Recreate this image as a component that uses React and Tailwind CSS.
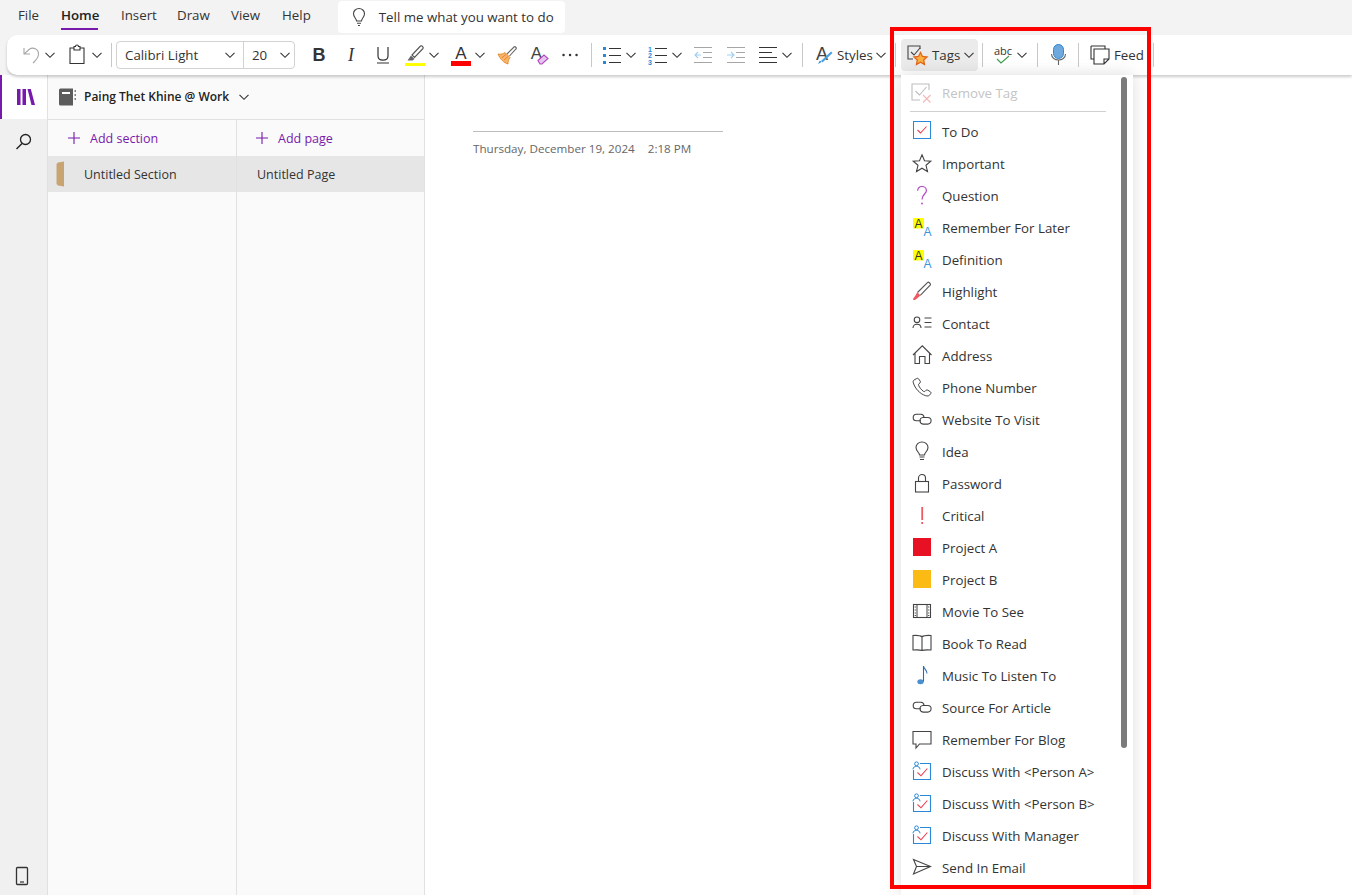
import React from "react";

const Svg = ({ w = 20, h = 20, className = "", children }) => (
  <svg width={w} height={h} viewBox={`0 0 ${w} ${h}`} fill="none" className={`block shrink-0 overflow-visible ${className}`}>
    {children}
  </svg>
);

const Chev = ({ className = "" }) => (
  <div className={`flex h-3 w-3 shrink-0 items-center justify-center ${className}`}>
    <Svg w={12} h={12}>
      <path d="M1.500 3.800 6 8.300l4.500-4.500" stroke="#333" strokeWidth="1.100" />
    </Svg>
  </div>
);

const Sep = ({ className = "" }) => <div className={`h-6 w-px shrink-0 bg-[#c8c8c8] ${className}`} />;

const Link2 = () => (
  <g stroke="#444" strokeWidth="1.100">
    <path d="M9 11.800H4.500a3.300 3.300 0 0 1 0-6.600h4.500a3.300 3.300 0 0 1 3 3.300" />
    <path d="M8 12a3.300 3.300 0 0 1 3-3.500h4.800a3.300 3.300 0 0 1 0 6.600H11a3.300 3.300 0 0 1-3-3.100z" />
  </g>
);

const AA = () => (
  <>
    <rect x="1" y="1" width="11" height="10.500" fill="#ffff00" />
    <text x="6.500" y="10.500" textAnchor="middle" fontSize="12" fill="#333" fontFamily="Liberation Sans">A</text>
    <text x="15.500" y="19" textAnchor="middle" fontSize="12" fill="#3a96dd" fontFamily="Liberation Sans">A</text>
  </>
);

const Discuss = () => (
  <>
    <path d="M8 2.500h10.500v16H1.500V9" stroke="#2b88d8" strokeWidth="1.100" />
    <circle cx="4.500" cy="2.800" r="1.900" stroke="#2b88d8" strokeWidth="1" />
    <path d="M1 8.300c0-4 7-4 7 0" stroke="#2b88d8" strokeWidth="1" />
    <path d="m5.500 11.500 3.500 3.300 6.300-7.300" stroke="#e8434f" strokeWidth="1.100" />
  </>
);

const icons = {
  todo: (
    <>
      <rect x="1.500" y="0.500" width="17" height="17" stroke="#2b88d8" />
      <path d="m5.500 9 3 3 6-6.500" stroke="#e8434f" strokeWidth="1.100" />
    </>
  ),
  star: <path d="m10 1.800 2.500 5.900 6.300.5-4.800 4.100 1.500 6.200L10 15.200l-5.500 3.300L6 12.300 1.200 8.200l6.300-.5z" stroke="#444" strokeWidth="1.100" />,
  question: (
    <>
      <path d="M5.700 5.800C5.800 3 7.700 1.500 10 1.500c2.500 0 4.400 1.700 4.400 4 0 3.500-4.400 3.800-4.400 9" stroke="#b146c2" strokeWidth="1.200" />
      <circle cx="10" cy="18.500" r="0.900" fill="#b146c2" />
    </>
  ),
  aa: <AA />,
  highlight: (
    <>
      <path d="M5.500 11.500 15.700 1.300c.8-.7 3.500 1.600 2.700 2.700L8.300 14.300" stroke="#555" strokeWidth="1.100" />
      <path d="M5.300 11.300 8.500 14.500 5 17.500 3 19H1.200v-1.500L3 15.200z" fill="#ee5a62" />
    </>
  ),
  contact: (
    <>
      <circle cx="5" cy="6.800" r="2.800" stroke="#444" strokeWidth="1.100" />
      <path d="M1 15c0-5 8-5 8 0" stroke="#444" strokeWidth="1.100" />
      <path d="M12.500 5h7M12.500 9.500h7M12.500 14h7" stroke="#444" strokeWidth="1" />
    </>
  ),
  home: <path d="M1 10 10.300 0.800 19.500 10M3 8.500V18.500h4.500V11.500h5.500v7h4.500V8.500" stroke="#444" strokeWidth="1.100" />,
  phone: <path d="M4.800 1.500 2 3c-1 .6-1 1.800-.6 3C3 11.500 8 17 13.700 18.700c1.800.5 3 .3 3.800-.5l1.300-1.700c.4-.6.200-1.200-.3-1.600l-2.600-1.700c-.7-.4-1.200-.4-1.700 0l-1 1c-.6.500-1.200.5-1.800.1-2-1.400-3.900-3.800-4.800-6.100-.2-.6-.1-1.100.4-1.500l1-.8c.5-.5.600-1 .3-1.600L6.700 2c-.4-.7-1.200-.9-1.900-.5z" stroke="#444" strokeWidth="1" />,
  link: <Link2 />,
  idea: (
    <>
      <path d="M7.500 14c0-2.500-3.500-3.800-3.500-7.500C4 3.500 6.500 1 10 1s6 2.500 6 5.500c0 3.700-3.500 5-3.500 7.500z" stroke="#444" strokeWidth="1.100" />
      <path d="M7.500 16h5M8 18.500h4" stroke="#444" strokeWidth="1.100" />
    </>
  ),
  lock: (
    <>
      <rect x="3.500" y="8.500" width="13" height="10.500" stroke="#444" strokeWidth="1.100" />
      <path d="M6.500 8.500V5a3.500 3.500 0 0 1 7 0v3.500" stroke="#444" strokeWidth="1.100" />
    </>
  ),
  critical: (
    <>
      <rect x="9.300" y="2" width="1.800" height="13" fill="#ee5a62" />
      <rect x="9.300" y="17" width="1.800" height="2" fill="#ee5a62" />
    </>
  ),
  a: <rect x="1" y="1" width="18" height="18" fill="#e81123" />,
  b: <rect x="1" y="1" width="18" height="18" fill="#fcba14" />,
  movie: (
    <>
      <rect x="1.500" y="3.500" width="17" height="13" stroke="#444" strokeWidth="1.100" />
      <path d="M5 4v12M15 4v12" stroke="#444" strokeWidth="1" />
      <path d="M3.300 5.500v1M3.300 8.500v1M3.300 11.500v1M3.300 14v1M16.700 5.500v1M16.700 8.500v1M16.700 11.500v1M16.700 14v1" stroke="#444" strokeWidth="1.200" />
    </>
  ),
  book: <path d="M10 3.800C8 2.200 4 2.300 1 2.500v14.500c3-.2 7-.3 9 .5 2-.8 6-.7 9-.5V2.500c-3-.2-7-.3-9 1.300zM10 3.800v13.700" stroke="#444" strokeWidth="1.100" />,
  music: (
    <>
      <ellipse cx="8.500" cy="16.700" rx="3.200" ry="2.500" fill="#4a90d0" />
      <path d="M11.500 16.500V1c.3 3 3.500 3.500 3.500 7.500" stroke="#2b6cb0" strokeWidth="1.100" />
    </>
  ),
  blog: <path d="M1 2.500h18v12.500H7.500L4 19v-4H1z" stroke="#444" strokeWidth="1.100" />,
  discuss: <Discuss />,
  send: <path d="m1.500 2.500 17 7-17 7.500 3-7.500zM4.500 9.500h14" stroke="#444" strokeWidth="1.100" />,
};

const tagItems = [
  ["To Do", "todo"],
  ["Important", "star"],
  ["Question", "question"],
  ["Remember For Later", "aa"],
  ["Definition", "aa"],
  ["Highlight", "highlight"],
  ["Contact", "contact"],
  ["Address", "home"],
  ["Phone Number", "phone"],
  ["Website To Visit", "link"],
  ["Idea", "idea"],
  ["Password", "lock"],
  ["Critical", "critical"],
  ["Project A", "a"],
  ["Project B", "b"],
  ["Movie To See", "movie"],
  ["Book To Read", "book"],
  ["Music To Listen To", "music"],
  ["Source For Article", "link"],
  ["Remember For Blog", "blog"],
  ["Discuss With <Person A>", "discuss"],
  ["Discuss With <Person B>", "discuss"],
  ["Discuss With Manager", "discuss"],
  ["Send In Email", "send"],
];

function Toolbar() {
  return (
    <div className="relative z-20 ml-[7px] flex h-10 items-center rounded-l-[10px] bg-white pl-[15px] text-[13.3px] leading-[21px] text-[#333] shadow-[0_2px_3px_rgba(0,0,0,0.2)]">
      <Svg w={18} h={20}>
        <path d="M2 3v6h6M2.300 8.800 7 4.500c4-3 9.500-.5 9.500 4.500 0 2.500-1.500 5-4 7.500l-1.500 1.500" stroke="#a6a6a6" strokeWidth="1.100" />
      </Svg>
      <Chev className="ml-1" />
      <Svg w={16} h={20} className="ml-[13px]">
        <path d="M4.500 3H1v15.500h14V3h-3.500M5 1.500h1.500a1.500 1.500 0 0 1 3 0H11V5H5z" stroke="#333" strokeWidth="1.100" />
      </Svg>
      <Chev className="ml-[6px]" />
      <Sep className="ml-2" />
      <div className="ml-1 flex h-7 w-[179px] shrink-0 items-center rounded border border-[#d2d2d2]">
        <div className="flex h-full w-[127px] items-center justify-between border-r border-[#d2d2d2] pr-[7px] pl-2">
          <span className="whitespace-nowrap">Calibri Light</span>
          <Chev />
        </div>
        <div className="flex h-full flex-1 items-center justify-between pr-[3px] pl-2">
          <span>20</span>
          <Chev />
        </div>
      </div>
      <div className="ml-4 w-4 shrink-0 text-center font-['Liberation_Sans',sans-serif] text-[18px] leading-none font-bold">B</div>
      <div className="ml-4 w-4 shrink-0 text-center font-['Liberation_Serif',serif] text-[18px] leading-none italic">I</div>
      <div className="ml-4 flex w-4 shrink-0 flex-col items-center">
        <Svg w={16} h={18}>
          <path d="M3 1v9c0 5.500 10 5.500 10 0V1M2 17h12" stroke="#333" strokeWidth="1.200" />
        </Svg>
      </div>
      <Svg w={20} h={22} className="ml-[14px]">
        <path d="M7 11 15.500 2c1-1 3.500 1.500 2.500 2.500L9.500 13.500z" stroke="#555" strokeWidth="1.100" />
        <path d="M6 11.500 9.500 15l-2 1.500H2.500z" fill="#666" />
        <rect x="0" y="19" width="20" height="3" fill="#ffff00" />
      </Svg>
      <Chev className="ml-[3px]" />
      <Svg w={22} h={22} className="ml-[10px]">
        <text x="11" y="15" textAnchor="middle" fontSize="17" fill="#333" fontFamily="Liberation Sans">A</text>
        <rect x="1" y="17" width="20" height="5" fill="#ff0000" />
      </Svg>
      <Chev className="ml-[2px]" />
      <Svg className="ml-[11px]">
        <path d="M1 9c3 .5 5 0 7-1.500l5 5c-1.500 2-2 4-2 6.500C7 18 3 14 1 9z" fill="#f9b36b" stroke="#e07f20" strokeWidth="0.800" />
        <path d="M5 12.500 9 9.500M7 15l4-3.500" stroke="#e07f20" strokeWidth="0.800" />
        <path d="m10 9 7-7c1.200-1 3 1 2 2l-6.500 7" stroke="#666" strokeWidth="1.100" />
      </Svg>
      <Svg className="ml-3">
        <text x="7.500" y="14" textAnchor="middle" fontSize="17" fill="#444" fontFamily="Liberation Sans">A</text>
        <path d="m9 15.500 6-5.500 4 3.500-6 5.500h-2z" stroke="#b146c2" strokeWidth="1.100" fill="#e7c4ee" />
      </Svg>
      <Svg className="ml-3">
        <path d="M2.500 10h2M9 10h2M15.500 10h2" stroke="#333" strokeWidth="2.400" strokeLinecap="round" strokeDasharray="0.100 9" />
      </Svg>
      <Sep className="ml-[10px]" />
      <Svg className="ml-[10px]">
        <rect x="1" y="2" width="3" height="3" fill="#2b88d8" />
        <rect x="1" y="9" width="3" height="3" fill="#2b88d8" />
        <rect x="1" y="16" width="3" height="3" fill="#2b88d8" />
        <path d="M7 3.500h12M7 10.500h12M7 17.500h12" stroke="#333" strokeWidth="1.100" />
      </Svg>
      <Chev className="ml-[3px]" />
      <Svg className="ml-[10px]">
        <text x="3" y="6.500" textAnchor="middle" fontSize="7" fill="#2b88d8" fontFamily="Liberation Sans" fontWeight="bold">1</text>
        <text x="3" y="13" textAnchor="middle" fontSize="7" fill="#2b88d8" fontFamily="Liberation Sans" fontWeight="bold">2</text>
        <text x="3" y="19.500" textAnchor="middle" fontSize="7" fill="#2b88d8" fontFamily="Liberation Sans" fontWeight="bold">3</text>
        <path d="M8 3.500h12M8 10.500h12M8 17.500h12" stroke="#333" strokeWidth="1.100" />
      </Svg>
      <Chev className="ml-1" />
      <Svg w={18} h={20} className="ml-[11px]">
        <path d="M0 2.500h18M9 7.500h9M9 12.500h9M0 17.500h18" stroke="#a6a6a6" strokeWidth="1.100" />
        <path d="M7 10H1M4 7l-3 3 3 3" stroke="#9fd0f0" strokeWidth="1.100" />
      </Svg>
      <Svg w={18} h={20} className="ml-[15px]">
        <path d="M0 2.500h18M9 7.500h9M9 12.500h9M0 17.500h18" stroke="#a6a6a6" strokeWidth="1.100" />
        <path d="M0 10h6M4 7l3 3-3 3" stroke="#9fd0f0" strokeWidth="1.100" />
      </Svg>
      <Svg w={18} h={20} className="ml-[14px]">
        <path d="M0 2.500h18M0 7.500h13M0 12.500h18M0 17.500h18" stroke="#333" strokeWidth="1.100" />
      </Svg>
      <Chev className="ml-1" />
      <Sep className="ml-[9px]" />
      <Svg className="ml-3">
        <text x="7" y="15" textAnchor="middle" fontSize="18" fill="#444" fontFamily="Liberation Sans">A</text>
        <path d="m3 19 2-3.500 1.500 1.500L3 19z" fill="#2b88d8" />
        <path d="m6 16 10-9.500 1.500 1.500L7.500 17.500z" fill="#4a9fe0" />
      </Svg>
      <span className="ml-[2px] w-9 shrink-0 whitespace-nowrap">Styles</span>
      <Chev className="ml-[2px]" />
      <Sep className="ml-2" />
      <div className="ml-[5px] flex h-8 w-[77px] shrink-0 items-center rounded bg-[#ebebeb] pl-[6px]">
        <Svg>
          <path d="M13 4V1H1v13h5" stroke="#444" strokeWidth="1.100" />
          <path d="m4 7 3 3 6-7" stroke="#444" strokeWidth="1.100" />
          <path d="m13.500 7.500 2 4 4.500.5-3.300 3 .8 4.500-4-2.200-4 2.200.8-4.500L7 12l4.500-.5z" fill="#fbb040" stroke="#e0661b" strokeWidth="1.300" />
        </Svg>
        <span className="ml-[5px] whitespace-nowrap">Tags</span>
        <Chev className="ml-[3px]" />
      </div>
      <Sep className="ml-1" />
      <div className="ml-[11px] flex w-[18px] shrink-0 flex-col items-center text-[11px] leading-[11px]">
        <span>abc</span>
        <Svg w={18} h={9}>
          <path d="m3 3 4 4 8-7" stroke="#3a9d4c" strokeWidth="1.100" />
        </Svg>
      </div>
      <Chev className="ml-1" />
      <Sep className="ml-[9px]" />
      <Svg w={15} h={22} className="ml-[13px]">
        <rect x="2.500" y="0.500" width="10" height="14" rx="5" fill="#6fa8dc" stroke="#2b88d8" />
        <path d="M0.500 10c0 8 14 8 14 0M7.500 16v5" stroke="#666" strokeWidth="1.100" />
      </Svg>
      <Sep className="ml-3" />
      <Svg className="ml-[11px]">
        <path d="M1 1h14v3M1 1v13h3M4 4h15v10l-5 5H4z M14 19v-5h5" stroke="#333" strokeWidth="1.100" />
      </Svg>
      <span className="ml-1 w-7 shrink-0 whitespace-nowrap">Feed</span>
      <Sep className="ml-[11px]" />
    </div>
  );
}

function TagMenu() {
  return (
    <div className="absolute top-[75px] left-[901px] z-30 h-[820px] w-[232px] bg-white text-[13.3px] leading-[21px] text-[#333] shadow-[0_0_16px_rgba(0,0,0,0.14)]">
      <div className="absolute top-[2px] right-[6px] h-[671px] w-[6px] rounded-full bg-[#7b7b7b]" />
      <div className="flex h-9 items-center pl-[10px] text-[#c4c4c4]">
        <Svg>
          <path d="M18 7V1H1v16h8" stroke="#bdbdbd" strokeWidth="1.100" />
          <path d="m4.500 8 4 4 7-8" stroke="#bdbdbd" strokeWidth="1.100" />
          <path d="m12 12 7.500 7.500M19.500 12 12 19.500" stroke="#f4b6b6" strokeWidth="1.100" />
        </Svg>
        <span className="ml-[11px]">Remove Tag</span>
      </div>
      <div className="mx-[9px] w-[196px] border-t border-[#d0d0d0]" />
      <div className="pt-1">
        {tagItems.map(([label, icon]) => (
          <div key={label} className="flex h-8 items-center pl-[11px]">
            <Svg className="-mt-[2px]">{icons[icon]}</Svg>
            <span className="ml-[10px] whitespace-nowrap">{label}</span>
          </div>
        ))}
      </div>
    </div>
  );
}

export default function App() {
  return (
    <div className="relative h-[895px] w-full overflow-hidden bg-[#f3f3f3] font-['Open_Sans',sans-serif] text-[13.3px] leading-[21px] text-[#333]">
      <div className="flex h-[35px] items-start">
        <div className="flex h-[30px] items-center pl-[18px]">
          <span className="w-[43px]">File</span>
          <span className="relative w-[60px] font-semibold text-[#222]">
            Home
            <span className="absolute -bottom-[4px] left-0 h-[2px] w-[37px] bg-[#7719aa]" />
          </span>
          <span className="w-[56px]">Insert</span>
          <span className="w-[54px]">Draw</span>
          <span className="w-[51px]">View</span>
          <span>Help</span>
        </div>
        <div className="mt-px ml-[27px] flex h-8 w-[227px] items-center rounded bg-white pl-[12px]">
          <Svg w={18} h={20}>
            <path d="M6.500 14c0-2.500-3-3.800-3-7.300C3.500 3.700 6 1.500 9 1.500s5.500 2.200 5.500 5.200c0 3.500-3 4.800-3 7.300zM7 16.300h4M8 18.500h2" stroke="#444" strokeWidth="1.100" />
          </Svg>
          <span className="ml-[11px] whitespace-nowrap">Tell me what you want to do</span>
        </div>
      </div>
      <Toolbar />
      <div className="flex h-[820px]">
        <div className="flex w-[48px] shrink-0 flex-col border-r border-[#e1e1e1] bg-[#f0f0f0]">
          <div className="flex h-11 items-center justify-center border-l-2 border-[#7719aa] bg-white">
            <Svg>
              <path d="M2 2h3.500v16H2zM7.500 2H11v16H7.500zM12.500 2h3.300L20 18h-3.500z" fill="#7719aa" />
            </Svg>
          </div>
          <div className="mt-[13px] flex justify-center">
            <Svg>
              <circle cx="11.500" cy="7.500" r="5" stroke="#222" strokeWidth="1.300" />
              <path d="M8 11.500 2.500 17" stroke="#222" strokeWidth="1.500" />
            </Svg>
          </div>
          <div className="mt-auto mb-[9px] flex justify-center pr-[3px]">
            <Svg w={14} h={20}>
              <rect x="1.500" y="1.500" width="11" height="17" rx="1" stroke="#333" strokeWidth="1.300" />
              <path d="M5 16h4" stroke="#333" strokeWidth="1.200" />
            </Svg>
          </div>
        </div>
        <div className="flex w-[377px] shrink-0 flex-col border-r border-[#e1e1e1] bg-[#fafafa] text-[12.5px] leading-[19px]">
          <div className="flex h-[45px] items-center border-b border-[#e1e1e1] pl-[11px]">
            <Svg w={18} h={18}>
              <path d="M0 2a1.500 1.500 0 0 1 1.500-1.500H14V17.500H1.500A1.500 1.500 0 0 1 0 16z" fill="#5c5c5c" />
              <rect x="3" y="4" width="8" height="2" fill="#fff" />
              <path d="M15.500 3h1.500M15.500 7h1.500M15.500 11h1.500" stroke="#5c5c5c" strokeWidth="1.500" />
            </Svg>
            <span className="ml-[7px] whitespace-nowrap text-[12px] leading-[18px] font-semibold text-[#222]">Paing Thet Khine @ Work</span>
            <Chev className="ml-[9px]" />
          </div>
          <div className="flex flex-1">
            <div className="w-[189px] shrink-0 border-r border-[#e1e1e1]">
              <div className="flex h-9 items-center pl-[20px] text-[#7719aa]">
                <Svg w={12} h={12}>
                  <path d="M6 0v12M0 6h12" stroke="#7719aa" strokeWidth="1.100" />
                </Svg>
                <span className="ml-[10px]">Add section</span>
              </div>
              <div className="flex h-9 items-center bg-[#e6e6e6] pl-2">
                <Svg w={9} h={26}>
                  <path d="M2 1.500 8 0.500V25.500L2 24.500 0.500 23V3z" fill="#c8a473" />
                </Svg>
                <span className="ml-[19px]">Untitled Section</span>
              </div>
            </div>
            <div className="flex-1">
              <div className="flex h-9 items-center pl-[19px] text-[#7719aa]">
                <Svg w={12} h={12}>
                  <path d="M6 0v12M0 6h12" stroke="#7719aa" strokeWidth="1.100" />
                </Svg>
                <span className="ml-[10px]">Add page</span>
              </div>
              <div className="flex h-9 items-center bg-[#e6e6e6] pl-5">Untitled Page</div>
            </div>
          </div>
        </div>
        <div className="flex-1 bg-white pt-[56px] pl-[48px]">
          <div className="w-[250px] border-t border-[#bdbdbd]" />
          <div className="mt-[9px] flex text-[11.65px] leading-4 text-[#666]">
            <span className="whitespace-nowrap">Thursday, December 19, 2024</span>
            <span className="ml-[13px] whitespace-nowrap">2:18 PM</span>
          </div>
        </div>
      </div>
      <TagMenu />
      <div className="pointer-events-none absolute top-[27px] left-[890px] z-40 h-[862px] w-[261px] border-4 border-[#ff0000]" />
    </div>
  );
}
